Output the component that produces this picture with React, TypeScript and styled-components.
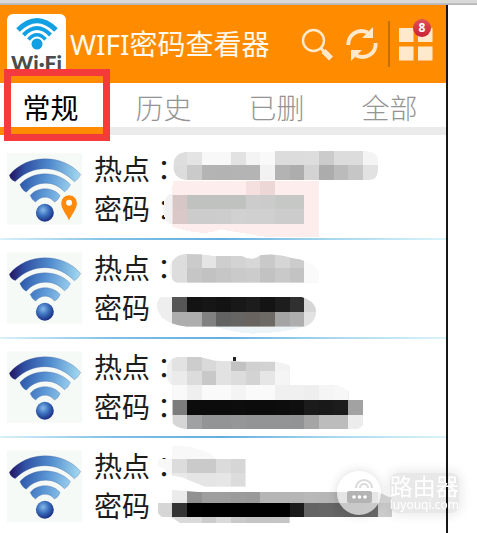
import React from "react";
import styled, { createGlobalStyle } from "styled-components";

const GlobalStyle = createGlobalStyle`
  * { box-sizing: border-box; }
  body {
    margin: 0;
    background: #fff;
    font-family: "Noto Sans", "Noto Sans CJK SC", sans-serif;
  }
  button { font: inherit; }
`;

const Page = styled.div`
  height: 100vh;
  display: flex;
  flex-direction: column;
  overflow: hidden;
`;

const WindowEdge = styled.div`
  flex: none;
  height: 5px;
  background: linear-gradient(#d9d9d9 0 3px, #a9a9a9 4px, #c4c4c4);
`;

const Phone = styled.main`
  flex: 1;
  min-height: 0;
  margin-right: 29px;
  border-right: 2px solid #161616;
  overflow: hidden;
`;

const Header = styled.header`
  height: 78px;
  display: flex;
  align-items: center;
  padding: 0 13px 0 7px;
  background: #ff8c00;
`;

const Logo = styled.div`
  flex: none;
  width: 59px;
  height: 60px;
  border-radius: 6px;
  background: #fff;
  overflow: hidden;
  display: flex;
  flex-direction: column;
  align-items: center;
  svg { flex: none; margin-top: 4px; }
`;

const LogoText = styled.span`
  font: 900 21px/23px Lato, sans-serif;
  color: #4c4c4c;
  white-space: nowrap;
`;

const Title = styled.h1`
  flex: 1;
  margin: 0 0 0 4px;
  font-size: 28px;
  line-height: 40px;
  font-weight: 400;
  color: #fffaf0;
  white-space: nowrap;
`;

const Actions = styled.div`
  flex: none;
  display: flex;
  align-items: center;
`;

const IconButton = styled.button`
  position: relative;
  display: flex;
  padding: 0;
  margin-right: 12px;
  border: 0;
  background: none;
  &:last-child { margin: 0; }
`;

const Divider = styled.span`
  width: 2px;
  height: 46px;
  margin-right: 9px;
  margin-left: -2px;
  background: #c86e05;
`;

const Badge = styled.span`
  position: absolute;
  top: -9px;
  right: 2px;
  width: 18px;
  height: 18px;
  border-radius: 50%;
  background: linear-gradient(#e0525c, #c9202e);
  color: #fff;
  font-size: 12px;
  line-height: 17px;
  font-weight: 700;
  text-align: center;
`;

const TabBar = styled.nav`
  position: relative;
`;

const Tabs = styled.div`
  display: grid;
  grid-template-columns: repeat(4, 1fr);
  margin-left: -6px;
`;

const Tab = styled.button<{ $active?: boolean }>`
  height: 52px;
  padding: 6px 0 0;
  border: 0;
  border-bottom: 8px solid ${(p) => (p.$active ? "#ff8c00" : "#ebebeb")};
  background: #fff;
  color: ${(p) => (p.$active ? "#000" : "#949494")};
  font-size: 28px;
  line-height: 38px;
  font-weight: ${(p) => (p.$active ? 400 : 300)};
`;

const Highlight = styled.div`
  position: absolute;
  top: -14px;
  left: 4px;
  width: 106px;
  height: 72px;
  border: 7px solid #f43a3a;
  pointer-events: none;
`;

const List = styled.ul`
  margin: 0;
  padding: 6px 0 0;
  list-style: none;
`;

const Row = styled.li`
  position: relative;
  display: flex;
  align-items: flex-start;
  gap: 12px;
  height: 99px;
  padding: 12px 0 0 7px;
  &::after {
    content: "";
    position: absolute;
    inset: auto 0 0;
    height: 2px;
    background: linear-gradient(90deg, #d9f1fa, #7fc0e6 25%, #64aee0 50%, #a9d9ee 75%, #d9f3fa);
  }
`;

const Details = styled.dl`
  margin: -3px 0 0;
  display: grid;
  grid-template-columns: auto 28px;
  font-size: 28px;
  line-height: 39px;
  color: #1c1c1c;
  dd { margin: 0; }
`;

const Colon = styled.span`
  font-family: "Noto Sans CJK JP", sans-serif;
`;

const Mosaic = styled.svg`
  position: absolute;
  top: 0;
  left: 150px;
  z-index: 1;
`;

const Watermark = styled.aside`
  position: fixed;
  right: 18px;
  bottom: 18px;
  z-index: 2;
  display: flex;
  align-items: center;
  gap: 9px;
  color: #fff;
`;

const WatermarkDisc = styled.div`
  width: 44px;
  height: 44px;
  border-radius: 50%;
  background: rgba(255, 255, 255, 0.65);
  box-shadow: 0 0 12px rgba(0, 0, 0, 0.14);
`;

const WatermarkText = styled.div`
  display: flex;
  flex-direction: column;
  background: rgba(0, 0, 0, 0.09);
  box-shadow: 0 0 12px 2px rgba(0, 0, 0, 0.09);
  border-radius: 8px;
`;

const WatermarkName = styled.strong`
  font: 400 23px/24px "Noto Sans CJK SC", sans-serif;
`;

const WatermarkSite = styled.span`
  font: 400 12px/16px "Noto Sans", sans-serif;
`;

type Strip = { x?: number; y: number; h: number; c: string };
type Patch = { clip: string; fill?: string; strips: Strip[] };

const CELL = 44;

const patches: Patch[][] = [
  [
    {
      clip: "M70 122H507V290H345L210 268Q160 292 67 260V140Z",
      fill: "#fdeded",
      strips: [
        { x: 287, y: 120, h: 44, c: "f5dfdf ecd6d6" },
        { y: 164, h: 43, c: "d6c6c6 c0c2c0 c0c2c0 c0c2c0 c0c2c0 cbcccb cbcbcb c6c8c6 c6c8c6" },
        { y: 207, h: 44, c: "dac8c8 cccccc cccccc cccdcc d0d1d0 d0d0d0 d0d0d0 cbcccb cccccc" },
      ],
    },
    {
      clip: "M108 36H375V32H640Q684 34 684 62V90Q684 120 655 120H108Q70 115 70 78Q70 40 108 36Z",
      strips: [
        { y: 32, h: 44, c: "dedede e4e4e4 f8f8f8 f8f8f8 e2e2e2 f4f4f4 f9f9f9 dcdcdc dcdcdc dddddd cbcbcb dcdcdc dcdcdc f4f4f4" },
        { y: 76, h: 44, c: "dcdcdc cacaca b4b4b4 b3b3b3 b4b4b4 b4b4b4 f2f2f2 b3b3b3 adadad d3d3d3 acacac bbbbbb c6c6c6 e2e2e2" },
      ],
    },
    { clip: "M67 160Q42 164 40 207Q42 250 67 254Z", fill: "#f2f2f2", strips: [] },
  ],
  [
    {
      clip: "M60 80Q70 42 115 42Q160 42 190 48H275Q310 66 330 46Q375 38 425 54Q480 60 508 95V128H85Q60 128 60 80Z",
      fill: "#f3f3f3",
      strips: [
        { y: 40, h: 44, c: "dddddd cbcbcb e5e5e5 cecece d3d3d3 d7d7d7 c9c9c9 d6d6d6 cccccc fafafa" },
        { y: 84, h: 44, c: "dddddd c6c6c6 c2c2c2 c6c6c6 cacaca cccccc c2c2c2 c9c9c9 c3c3c3 fafafa" },
      ],
    },
    { clip: "M190 260H463Q380 284 280 280Z", fill: "#edf5f9", strips: [] },
    {
      clip: "M30 171H455Q498 185 498 215Q498 248 463 260H110Q20 250 20 190Z",
      fill: "#eeeeee",
      strips: [
        { y: 171, h: 44, c: "565656 131313 161616 131313 181818 1c1c1c 141414 1d1d1d 303030 d6d6d6" },
        { y: 215, h: 45, c: "adadad adadad 818181 626262 666564 69635f 6d6964 a4a4a4 aeaeae e2e2e2" },
      ],
    },
  ],
  [
    {
      clip: "M50 93Q50 52 90 51H150L195 62L280 65H375L419 75V135H375V136H565L597 155V180H67V134Q50 130 50 93Z",
      fill: "#f0f0f0",
      strips: [
        { y: 51, h: 42, c: "e2e2e2 cdcdcd d9d9d9 e2e2e2 c2c2c2 d0d0d0 d2d2d2 f2f2f2" },
        { y: 93, h: 43, c: "ebebeb dcdcdc c8c8c8 e2e2e2 dcdcdc d3d3d3 e6e6e6 f5f5f5" },
        { y: 136, h: 44, c: "f9f9f9 efefef fafafa fafafa f4f4f4 fafafa fafafa f0f0f0 f0f0f0 eeeeee f5f5f5 f7f7f7" },
      ],
    },
    { clip: "M249 52H257V63H249Z", fill: "#222222", strips: [] },
    {
      clip: "M67 180H640V255L625 268H110Q67 260 67 245Z",
      strips: [
        { y: 180, h: 44, c: "7c7c7c 0c0c0c 0c0c0c 0c0c0c 0d0d0d 0c0c0c 0c0c0c 0d0d0d 0f0f0f 1b1b1b 191919 1c1c1c a2a2a2" },
        { y: 224, h: 44, c: "d6d6d6 a0a1a2 929496 929496 959697 929496 929496 929496 919395 a5a5a5 bcbcbc bcbcbc ececec" },
      ],
    },
  ],
  [
    {
      clip: "M24 56H67V18Q150 16 200 56H287V140H165L95 112L52 104Q46 80 24 80Z",
      fill: "#f8f8f8",
      strips: [
        { y: 56, h: 43, c: "dcdcdc cacaca cacaca dbdbdb d6d6d6" },
        { y: 99, h: 42, c: "e9e9e9 e5e5e5 e5e5e5 e6e6e6 dcdcdc" },
      ],
    },
    {
      clip: "M20 150H67L145 156H684L728 176V232H683V233H419V249H90L67 233H40Q15 220 16 188Z",
      fill: "#ffffff",
      strips: [
        { x: 23, y: 188, h: 44, c: "d6d6d6" },
        { y: 144, h: 44, c: "ebebeb 919191 9e9e9e 9e9e9e 9b9b9b 999999 b5b5b5 b5b5b5 b5b5b5 b8b8b8 b6b6b6 b4b4b4 b4b4b4 b8b8b8 d9d9d9" },
        { y: 188, h: 44, c: "343434 020202 000000 000000 000000 000000 000000 000000 1b1b1b 646464 666666 646464 646464 686868 cccccc" },
        { y: 232, h: 17, c: "dadada dadada cccccc dadada c9c9c9 c4c4c4 c4c4c4 c5c5c5" },
      ],
    },
  ],
];

const WifiSignal = ({ pinned, id }: { pinned?: boolean; id: string }) => (
  <svg width="75" height="72" viewBox="21 66 226 215" aria-hidden="true">
    <defs>
      <linearGradient id={`${id}-arc`} gradientUnits="userSpaceOnUse" x1="28" y1="130" x2="243" y2="150">
        <stop offset="0" stopColor="#24105e" />
        <stop offset="0.2" stopColor="#2f4fa2" />
        <stop offset="0.55" stopColor="#4f8bcc" />
        <stop offset="1" stopColor="#a6dcf2" />
      </linearGradient>
      <linearGradient id={`${id}-inner`} gradientUnits="userSpaceOnUse" x1="62" y1="140" x2="212" y2="180">
        <stop offset="0" stopColor="#2a55a8" />
        <stop offset="0.5" stopColor="#5a95d4" />
        <stop offset="1" stopColor="#9bd0ee" />
      </linearGradient>
      <radialGradient id={`${id}-ball`} cx="0.4" cy="0.35" r="0.65">
        <stop offset="0" stopColor="#86b9ea" />
        <stop offset="0.5" stopColor="#3b70bd" />
        <stop offset="1" stopColor="#1c2f84" />
      </radialGradient>
    </defs>
    <rect x="21" y="66" width="226" height="215" fill="#f6faf6" />
    <g stroke="#4a62a4" strokeWidth="1" strokeLinejoin="round">
      <path d="M28 132C80 67 190 66 243 130Q236 144 224 152C175 99 97 99 46 151Q32 147 28 132Z" fill={`url(#${id}-arc)`} />
      <path d="M60 160C98 117 173 117 212 160Q207 174 194 182C165 147 110 147 79 183Q66 177 60 160Z" fill={`url(#${id}-inner)`} />
      <path d="M91 193C112 166 159 166 181 193Q176 207 164 213C150 193 122 193 107 213Q96 207 91 193Z" fill={`url(#${id}-inner)`} />
    </g>
    <circle cx="135" cy="245" r="27" fill={`url(#${id}-ball)`} />
    {pinned && (
      <g>
        <path d="M208 272C200 250 183 236 183 216A25 25 0 0 1 233 216C233 236 216 250 208 272Z" fill="#ff8a0c" stroke="#f6faf6" strokeWidth="3" />
        <circle cx="208" cy="215" r="9" fill="#fff" />
      </g>
    )}
  </svg>
);

const Redaction = ({ index }: { index: number }) => (
  <Mosaic
    width="243"
    height="99"
    viewBox={`0 ${[3, 0, -3, -6][index]} 729 297`}
    shapeRendering="crispEdges"
    aria-hidden="true"
  >
    {patches[index].map((patch, i) => (
      <g key={i}>
        <clipPath id={`patch-${index}-${i}`}>
          <path d={patch.clip} />
        </clipPath>
        {patch.fill && <path d={patch.clip} fill={patch.fill} />}
        <g clipPath={`url(#patch-${index}-${i})`}>
          {patch.strips.map((s) =>
            s.c.split(" ").map((c, n) => (
              <rect key={`${s.y}-${n}`} x={(s.x ?? 67) + n * CELL} y={s.y} width={CELL} height={s.h} fill={`#${c}`} />
            )),
          )}
        </g>
      </g>
    ))}
  </Mosaic>
);

const tabs = ["常规", "历史", "已删", "全部"];

export default function App() {
  return (
    <Page>
      <GlobalStyle />
      <WindowEdge />
      <Phone>
        <Header>
          <Logo>
            <svg width="42" height="33" viewBox="0 0 42 33" aria-hidden="true">
              <g fill="none" stroke="#12a0e4">
                <path d="M2 12Q21 -7 40 12" strokeWidth="5" />
                <path d="M7.500 17Q21 3 34.500 17" strokeWidth="4" />
                <path d="M12.500 21.500Q21 12 29.500 21.500" strokeWidth="3.600" />
              </g>
              <circle cx="21" cy="26" r="5.500" fill="#12a0e4" />
            </svg>
            <LogoText>Wi·Fi</LogoText>
          </Logo>
          <Title>WIFI密码查看器</Title>
          <Actions>
            <IconButton aria-label="搜索">
              <svg width="33" height="33" viewBox="0 0 33 33" fill="none" stroke="#ffe9cd">
                <circle cx="12.500" cy="12.500" r="10.500" strokeWidth="2.400" />
                <path d="M19.500 20L23 23.500" strokeWidth="3" />
                <path d="M22.500 23L30 30.500" strokeWidth="5.500" />
              </svg>
            </IconButton>
            <IconButton aria-label="刷新">
              <svg width="32" height="34" viewBox="0 0 32 34">
                <g fill="none" stroke="#ffe9cd" strokeWidth="3.800">
                  <path d="M2.300 18C2 8 11 1 22 5.500" />
                  <path d="M29.700 16C30 26 21 33 10 28.500" />
                </g>
                <path d="M27 0V11H16Z" fill="#ffe9cd" />
                <path d="M5 34V23H16Z" fill="#ffe9cd" />
              </svg>
            </IconButton>
            <Divider />
            <IconButton aria-label="更多">
              <svg width="34" height="33" viewBox="0 0 34 33" fill="#ffe9cd">
                <path d="M0 0H14.500V14H0ZM19 0H33.500V14H19ZM0 18.500H14.500V32.500H0ZM19 18.500H33.500V32.500H19Z" />
              </svg>
              <Badge>8</Badge>
            </IconButton>
          </Actions>
        </Header>
        <TabBar>
          <Tabs>
            {tabs.map((t, i) => (
              <Tab key={t} $active={i === 0}>{t}</Tab>
            ))}
          </Tabs>
          <Highlight />
        </TabBar>
        <List>
          {patches.map((_, i) => (
            <Row key={i}>
              <WifiSignal id={`signal-${i}`} pinned={i === 0} />
              <Details>
                <dt>热点</dt>
                <dd><Colon>：</Colon></dd>
                <dt>密码</dt>
                <dd><Colon>：</Colon></dd>
              </Details>
              <Redaction index={i} />
            </Row>
          ))}
        </List>
      </Phone>
      <Watermark>
        <WatermarkDisc>
          <svg width="44" height="44" viewBox="0 0 44 44" aria-hidden="true">
            <rect x="10" y="20" width="25" height="12" rx="2" fill="#b4b4b4" />
            <g fill="#fff">
              <circle cx="17" cy="26" r="1.800" />
              <circle cx="22.500" cy="26" r="1.800" />
              <circle cx="28" cy="26" r="1.800" />
            </g>
            <g fill="none" stroke="#dadada" strokeWidth="2">
              <path d="M19 17A8 8 0 0 1 35 17" />
              <path d="M23 17A4 4 0 0 1 31 17" />
            </g>
          </svg>
        </WatermarkDisc>
        <WatermarkText>
          <WatermarkName>路由器</WatermarkName>
          <WatermarkSite>luyouqi.com</WatermarkSite>
        </WatermarkText>
      </Watermark>
    </Page>
  );
}
